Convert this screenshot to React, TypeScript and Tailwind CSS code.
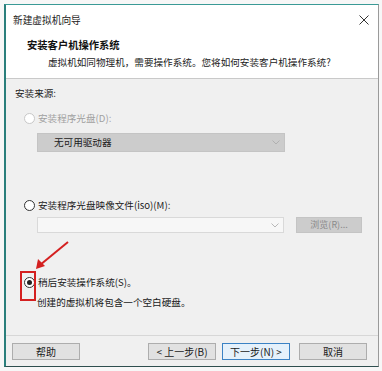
import React from "react";

const font = { fontFamily: '"Noto Sans CJK SC", "Noto Sans", sans-serif' };

function Radio({ checked, disabled }: { checked?: boolean; disabled?: boolean }) {
  return (
    <span
      className={
        "flex h-[11px] w-[11px] shrink-0 items-center justify-center rounded-full border bg-white " +
        (disabled ? "border-[#c8c8c8]" : "border-[#333333]")
      }
    >
      {checked && <span className="h-[5px] w-[5px] rounded-full bg-[#222222]" />}
    </span>
  );
}

function Chevron({ color }: { color: string }) {
  return (
    <svg width="8" height="5" viewBox="0 0 8 5">
      <path d="M0.5 0.5 L4 4 L7.5 0.5" fill="none" stroke={color} strokeWidth="1" />
    </svg>
  );
}

function Btn({ children, primary, className = "" }: { children: React.ReactNode; primary?: boolean; className?: string }) {
  return (
    <div
      className={
        "flex h-[17px] w-[68px] items-center justify-center border text-[10px] text-[#1a1a1a] " +
        (primary ? "border-[#3b82c4] bg-[#e5f1fb]" : "border-[#adadad] bg-[#e1e1e1]") +
        " " +
        className
      }
    >
      {children}
    </div>
  );
}

export default function App() {
  return (
    <div className="relative h-[371px] w-[382px] bg-[#f7f7f7] pl-[4px] pt-[4px]" style={font}>
      <div className="flex h-[363px] w-[375px] flex-col border-b border-l-2 border-r border-t border-b-[#2f4f4f] border-l-[#2b7f7c] border-r-[#9a9a9a] border-t-[#3a9a96] bg-[#f0f0f0]">
        {/* title bar */}
        <div className="flex h-[30px] items-center justify-between bg-white pl-[7px] pr-[9px]">
          <span className="text-[9.7px] text-[#1a1a1a]">新建虚拟机向导</span>
          <svg width="10" height="10" viewBox="0 0 10 10">
            <path d="M0.5 0.5 L9.5 9.5 M9.5 0.5 L0.5 9.5" stroke="#333" strokeWidth="1" />
          </svg>
        </div>
        {/* header */}
        <div className="h-[44px] border-b border-[#c9c9c9] bg-white">
          <div className="ml-[21px] mt-[3px] h-[14px] text-[10.3px] font-bold leading-[14px] text-[#111]">
            安装客户机操作系统
          </div>
          <div className="ml-[42px] mt-[3px] h-[14px] text-[9.6px] leading-[14px] text-[#222]">
            虚拟机如同物理机，需要操作系统。您将如何安装客户机操作系统?
          </div>
        </div>
        {/* body */}
        <div className="flex h-[257px] flex-col border-b border-[#d7d7d7] pl-[9px]">
          <div className="mt-[7px] h-[14px] text-[9.6px] leading-[14px] text-[#1a1a1a]">安装来源:</div>
          <div className="ml-[9px] mt-[11px] flex h-[14px] items-center gap-[3px]">
            <Radio disabled />
            <span className="text-[9.6px] text-[#a0a0a0]">安装程序光盘(D):</span>
          </div>
          <div className="ml-[22px] mt-[8px] flex h-[19px] w-[248px] items-center justify-between border border-[#c4c4c4] bg-[#cccccc] pl-[16px] pr-[4px]">
            <span className="text-[9.6px] text-[#1a1a1a]">无可用驱动器</span>
            <Chevron color="#b0b0b0" />
          </div>
          <div className="ml-[9px] mt-[46px] flex h-[14px] items-center gap-[3px]">
            <Radio />
            <span className="text-[9.6px] text-[#1a1a1a]">安装程序光盘映像文件(iso)(M):</span>
          </div>
          <div className="ml-[22px] mt-[5px] flex h-[16px] items-center">
            <div className="flex h-[16px] w-[247px] items-center justify-end border border-[#d9d9d9] bg-[#f7f7f7] pr-[4px]">
              <Chevron color="#b8b8b8" />
            </div>
            <div className="ml-[12px] flex h-[16px] w-[66px] items-center justify-center border border-[#c4c4c4] bg-[#cccccc] text-[9px] text-[#8a8a8a]">
              浏览(R)...
            </div>
          </div>
          <div className="ml-[9px] mt-[42px] flex h-[14px] items-center gap-[3px]">
            <Radio checked />
            <span className="text-[9.6px] text-[#1a1a1a]">稍后安装操作系统(S)。</span>
          </div>
          <div className="ml-[22px] mt-[6px] h-[14px] text-[9.6px] leading-[14px] text-[#1a1a1a]">
            创建的虚拟机将包含一个空白硬盘。
          </div>
        </div>
        {/* footer */}
        <div className="flex flex-1 items-start pl-[6px] pt-[7px]">
          <Btn>帮助</Btn>
          <Btn className="ml-[68px]">&lt; 上一步(B)</Btn>
          <Btn primary className="ml-[6px]">下一步(N) &gt;</Btn>
          <Btn className="ml-[9px]">取消</Btn>
        </div>
      </div>
      {/* annotations */}
      <div className="absolute left-[20px] top-[271px] h-[30px] w-[16px] border-2 border-[#d42020]" />
      <svg className="absolute left-0 top-0" width="382" height="371" viewBox="0 0 382 371">
        <line x1="68" y1="242" x2="40" y2="265" stroke="#d42020" strokeWidth="2" />
        <path d="M36 269 L38 259 L45 266 Z" fill="#d42020" />
      </svg>
    </div>
  );
}
